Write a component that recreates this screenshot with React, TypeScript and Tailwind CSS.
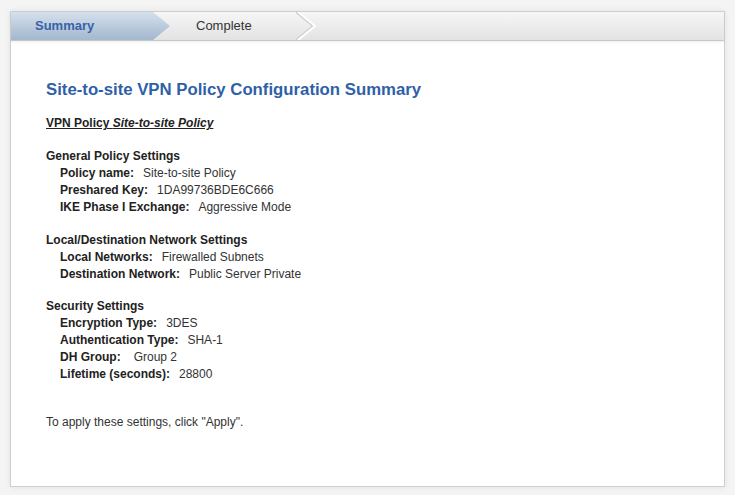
import React from "react";

interface Field {
  label: string;
  value: string;
  wide?: boolean;
}

interface Section {
  title: string;
  fields: Field[];
  gap: string;
}

const sections: Section[] = [
  {
    title: "General Policy Settings",
    gap: "mt-[16px]",
    fields: [
      { label: "Policy name:", value: "Site-to-site Policy" },
      { label: "Preshared Key:", value: "1DA99736BDE6C666" },
      { label: "IKE Phase I Exchange:", value: "Aggressive Mode" },
    ],
  },
  {
    title: "Local/Destination Network Settings",
    gap: "mt-[16px]",
    fields: [
      { label: "Local Networks:", value: "Firewalled Subnets" },
      { label: "Destination Network:", value: "Public Server Private" },
    ],
  },
  {
    title: "Security Settings",
    gap: "mt-[15px]",
    fields: [
      { label: "Encryption Type:", value: "3DES" },
      { label: "Authentication Type:", value: "SHA-1" },
      { label: "DH Group:", value: "Group 2", wide: true },
      { label: "Lifetime (seconds):", value: "28800" },
    ],
  },
];

function Chevron() {
  return (
    <svg width="22" height="28" viewBox="0 0 22 28" className="shrink-0">
      <polyline points="0,0 17,14 0,28" fill="none" stroke="#cfcfcf" strokeWidth="2" />
      <polyline points="2,0 19,14 2,28" fill="none" stroke="#ffffff" strokeWidth="2" />
    </svg>
  );
}

function WizardSteps() {
  return (
    <div className="flex h-[29px] items-center border-b border-[#c8c8c8] bg-gradient-to-b from-[#f6f6f6] to-[#e3e3e3] shadow-[0_1px_2px_rgba(0,0,0,0.08)]">
      <div className="flex h-full w-[159px] items-center bg-gradient-to-b from-[#d6e0ec] to-[#a3b7ce] pl-[24px] text-[13px] font-bold text-[#3762a8] [clip-path:polygon(0_0,calc(100%-17px)_0,100%_50%,calc(100%-17px)_100%,0_100%)]">
        Summary
      </div>
      <div className="flex h-full w-[126px] items-center pl-[26px] text-[13px] text-[#333333]">Complete</div>
      <Chevron />
    </div>
  );
}

export default function App() {
  return (
    <div className="min-h-screen bg-[#f4f4f4] pl-[10px] pt-[11px] font-['Liberation_Sans',Arial,sans-serif]">
      <div className="h-[476px] w-[715px] border border-[#cfcfcf] bg-white shadow-[0_0_6px_rgba(0,0,0,0.08)]">
        <WizardSteps />

        <div className="px-[35px] pt-[39px] text-[12px] leading-[17px] text-[#333333]">
          <h1 className="text-[16.75px] font-bold leading-[20px] text-[#2f5fa9]">
            Site-to-site VPN Policy Configuration Summary
          </h1>

          <p className="mt-[15px] font-bold text-[#222222] underline">
            VPN Policy <span className="italic">Site-to-site Policy</span>
          </p>

          {sections.map((section) => (
            <div key={section.title} className={section.gap}>
              <div className="font-bold text-[#222222]">{section.title}</div>
              {section.fields.map((field) => (
                <div key={field.label} className="pl-[14px]">
                  <span className="font-bold text-[#222222]">{field.label}</span>
                  <span className={field.wide ? "ml-[13px]" : "ml-[9px]"}>{field.value}</span>
                </div>
              ))}
            </div>
          ))}

          <p className="mt-[31px]">To apply these settings, click "Apply".</p>
        </div>
      </div>
    </div>
  );
}
